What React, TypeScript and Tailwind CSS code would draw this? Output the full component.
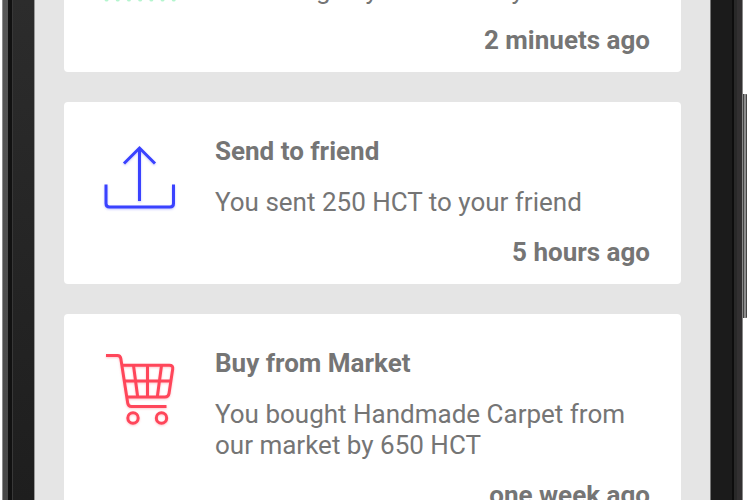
import type { ReactNode } from 'react';

function WalletIcon() {
  return (
    <svg viewBox="0 0 72 72" className="h-[72px] w-[72px]" fill="none" stroke="#b4f5ce" strokeWidth="3" strokeLinecap="round" aria-hidden="true">
      <path d="M2 14H70M2 28H70M2 14V62M70 14V62" />
      <path d="M2.500 69.500H71" strokeDasharray="0.1 11.100" strokeWidth="4" />
    </svg>
  );
}

function SendIcon() {
  return (
    <svg viewBox="0 0 72 72" className="h-[72px] w-[72px] drop-shadow-[0_1px_1px_rgba(58,66,255,0.3)]" fill="none" stroke="#3a42ff" strokeWidth="3" aria-hidden="true">
      <path d="M35.500 59V6" />
      <path d="M20 21.500L35.500 6L51 21.500" />
      <path d="M2 42.500V61.500Q2 65 5.500 65H66Q69.500 65 69.500 61.500V42.500" />
    </svg>
  );
}

function CartIcon() {
  return (
    <svg viewBox="0 0 72 72" className="h-[72px] w-[72px] drop-shadow-[0_1px_1px_rgba(255,70,90,0.3)]" fill="none" stroke="#ff465a" strokeWidth="3" aria-hidden="true">
      <path d="M2 1.500H13.500Q16.300 1.500 16.800 4.500L23.700 49Q24.200 52.500 27.500 52.500H62.500" />
      <path d="M18 11.300H65.500Q69.300 11.300 68.700 15L65 39.500Q64.400 43 61 43H23" />
      <path d="M20 27H66.500M29.500 11.500L33.700 43M43.500 11.500V43M57.500 11.500L53.300 43" />
      <circle cx="29" cy="64" r="5.200" />
      <circle cx="57.500" cy="64" r="5.200" />
    </svg>
  );
}

type Entry = { title: string; text: string; time: string; icon: ReactNode };

const entries: Entry[] = [
  { title: 'Charge wallet', text: 'You charged your wallet by 500 HCT', time: '2 minuets ago', icon: <WalletIcon /> },
  { title: 'Send to friend', text: 'You sent 250 HCT to your friend', time: '5 hours ago', icon: <SendIcon /> },
  { title: 'Buy from Market', text: 'You bought Handmade Carpet from our market by 650 HCT', time: 'one week ago', icon: <CartIcon /> },
];

function ActivityCard({ title, text, time, icon }: Entry) {
  return (
    <li className="flex gap-[39px] rounded-[4px] bg-white pt-[34px] pr-[31px] pb-4 pl-10">
      <div className="shrink-0 pt-[6px]">{icon}</div>
      <div className="flex min-w-0 flex-1 flex-col">
        <h2 className="font-bold">{title}</h2>
        <p className="mt-5">{text}</p>
        <time className="mt-[19px] text-right font-bold">{time}</time>
      </div>
    </li>
  );
}

export default function App() {
  return (
    <div className="flex h-screen overflow-hidden bg-white pl-[2px] font-['Roboto',sans-serif] text-[26px] leading-[31px] text-[#757575]">
      <div className="flex shrink-0">
        <div className="w-px bg-[#8c8c8c]" />
        <div className="w-[5px] bg-linear-to-b from-[#575757] to-[#484848]" />
        <div className="w-[4px] bg-[#111111]" />
        <div className="w-px bg-[#383838]" />
        <div className="w-[21px] bg-linear-to-b from-[#2c2c2c] to-[#1e1e1e]" />
        <div className="w-px bg-[#999999]" />
      </div>
      <main className="min-w-0 flex-1 bg-[#e5e5e5] px-[29px]">
        <ul className="-mt-[110px] flex flex-col gap-[30px]">
          {entries.map((entry) => (
            <ActivityCard key={entry.title} {...entry} />
          ))}
        </ul>
      </main>
      <div className="flex shrink-0">
        <div className="w-px bg-[#777777]" />
        <div className="w-[21px] bg-[#1b1b1b]" />
        <div className="w-[2px] bg-[#0d0d0d]" />
        <div className="w-[3px] bg-[#292929]" />
        <div className="w-[5px] bg-[#323031]" />
        <div className="w-px bg-[#888888]" />
      </div>
      <div className="flex w-[7px] shrink-0 pt-[94px]">
        <div className="h-[224px] w-[4px] rounded-r-[1px] border-r border-l border-[#444444] bg-[#8c8c8c]" />
      </div>
    </div>
  );
}
